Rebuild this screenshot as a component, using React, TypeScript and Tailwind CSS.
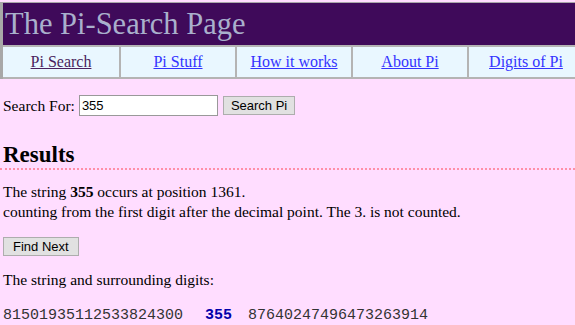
import React from 'react';

const NAV = ['Pi Search', 'Pi Stuff', 'How it works', 'About Pi', 'Digits of Pi'];

export default function App() {
    return (
        <div className="min-h-[325px] bg-[#ffddff] pt-[2px] font-['Liberation_Serif',serif] text-[15.5px] text-black">
            {/* header + nav table */}
            <div className="border-l-[3px] border-t border-[#a8a8a8]">
                <div className="bg-[#3f0a5a] h-[42px] pl-[2px] text-[30.5px] leading-[42px] text-[#a9b0cc]">The Pi-Search Page</div>
                <div className="flex h-[34px] border-y-2 border-[#b4b4b4] bg-[#e9f7ff]">
                    {NAV.map((n, i) => (
                        <div key={n} className={`flex w-[116px] shrink-0 items-center justify-center border-[#b4b4b4] ${i > 0 ? 'border-l-2' : ''}`}>
                            <a href="#" className={`text-[16px] underline ${i === 0 ? 'text-[#4a1f5e]' : 'text-[#3333ff]'}`}>{n}</a>
                        </div>
                    ))}
                </div>
            </div>

            <div className="px-[3px]">
                {/* search form */}
                <div className="mt-[15px] flex items-center">
                    <span>Search For:</span>
                    <input defaultValue="355" className="ml-[4px] h-[21px] w-[139px] border border-[#999] bg-white px-[2px] font-['Liberation_Sans',sans-serif] text-[13px] outline-none" />
                    <button className="ml-[5px] h-[19px] border border-[#adadad] bg-[#e1e1e1] px-[7px] font-['Liberation_Sans',sans-serif] text-[13px] leading-none">Search Pi</button>
                </div>

                <h2 className="mt-[25px] text-[23px] font-bold leading-[26px]">Results</h2>
            </div>
            <div className="border-t-2 border-dotted border-[#ff8fa8]" />

            <div className="px-[3px]">
                <p className="mt-[12px] leading-[20px]">
                    The string <b>355</b> occurs at position 1361.<br />
                    counting from the first digit after the decimal point. The 3. is not counted.
                </p>

                <button className="mt-[15px] h-[19px] border border-[#adadad] bg-[#e1e1e1] px-[9px] font-['Liberation_Sans',sans-serif] text-[13px] leading-none">Find Next</button>

                <p className="mt-[12px] leading-[20px]">The string and surrounding digits:</p>

                <p className="mt-[16px] whitespace-pre font-['Liberation_Mono',monospace] text-[15px] leading-[20px] text-[#333]">
                    81501935112533824300  <b className="ml-[4px] mr-[-2px] text-[#0000aa]">355</b>  87640247496473263914
                </p>
            </div>
        </div>
    );
}
